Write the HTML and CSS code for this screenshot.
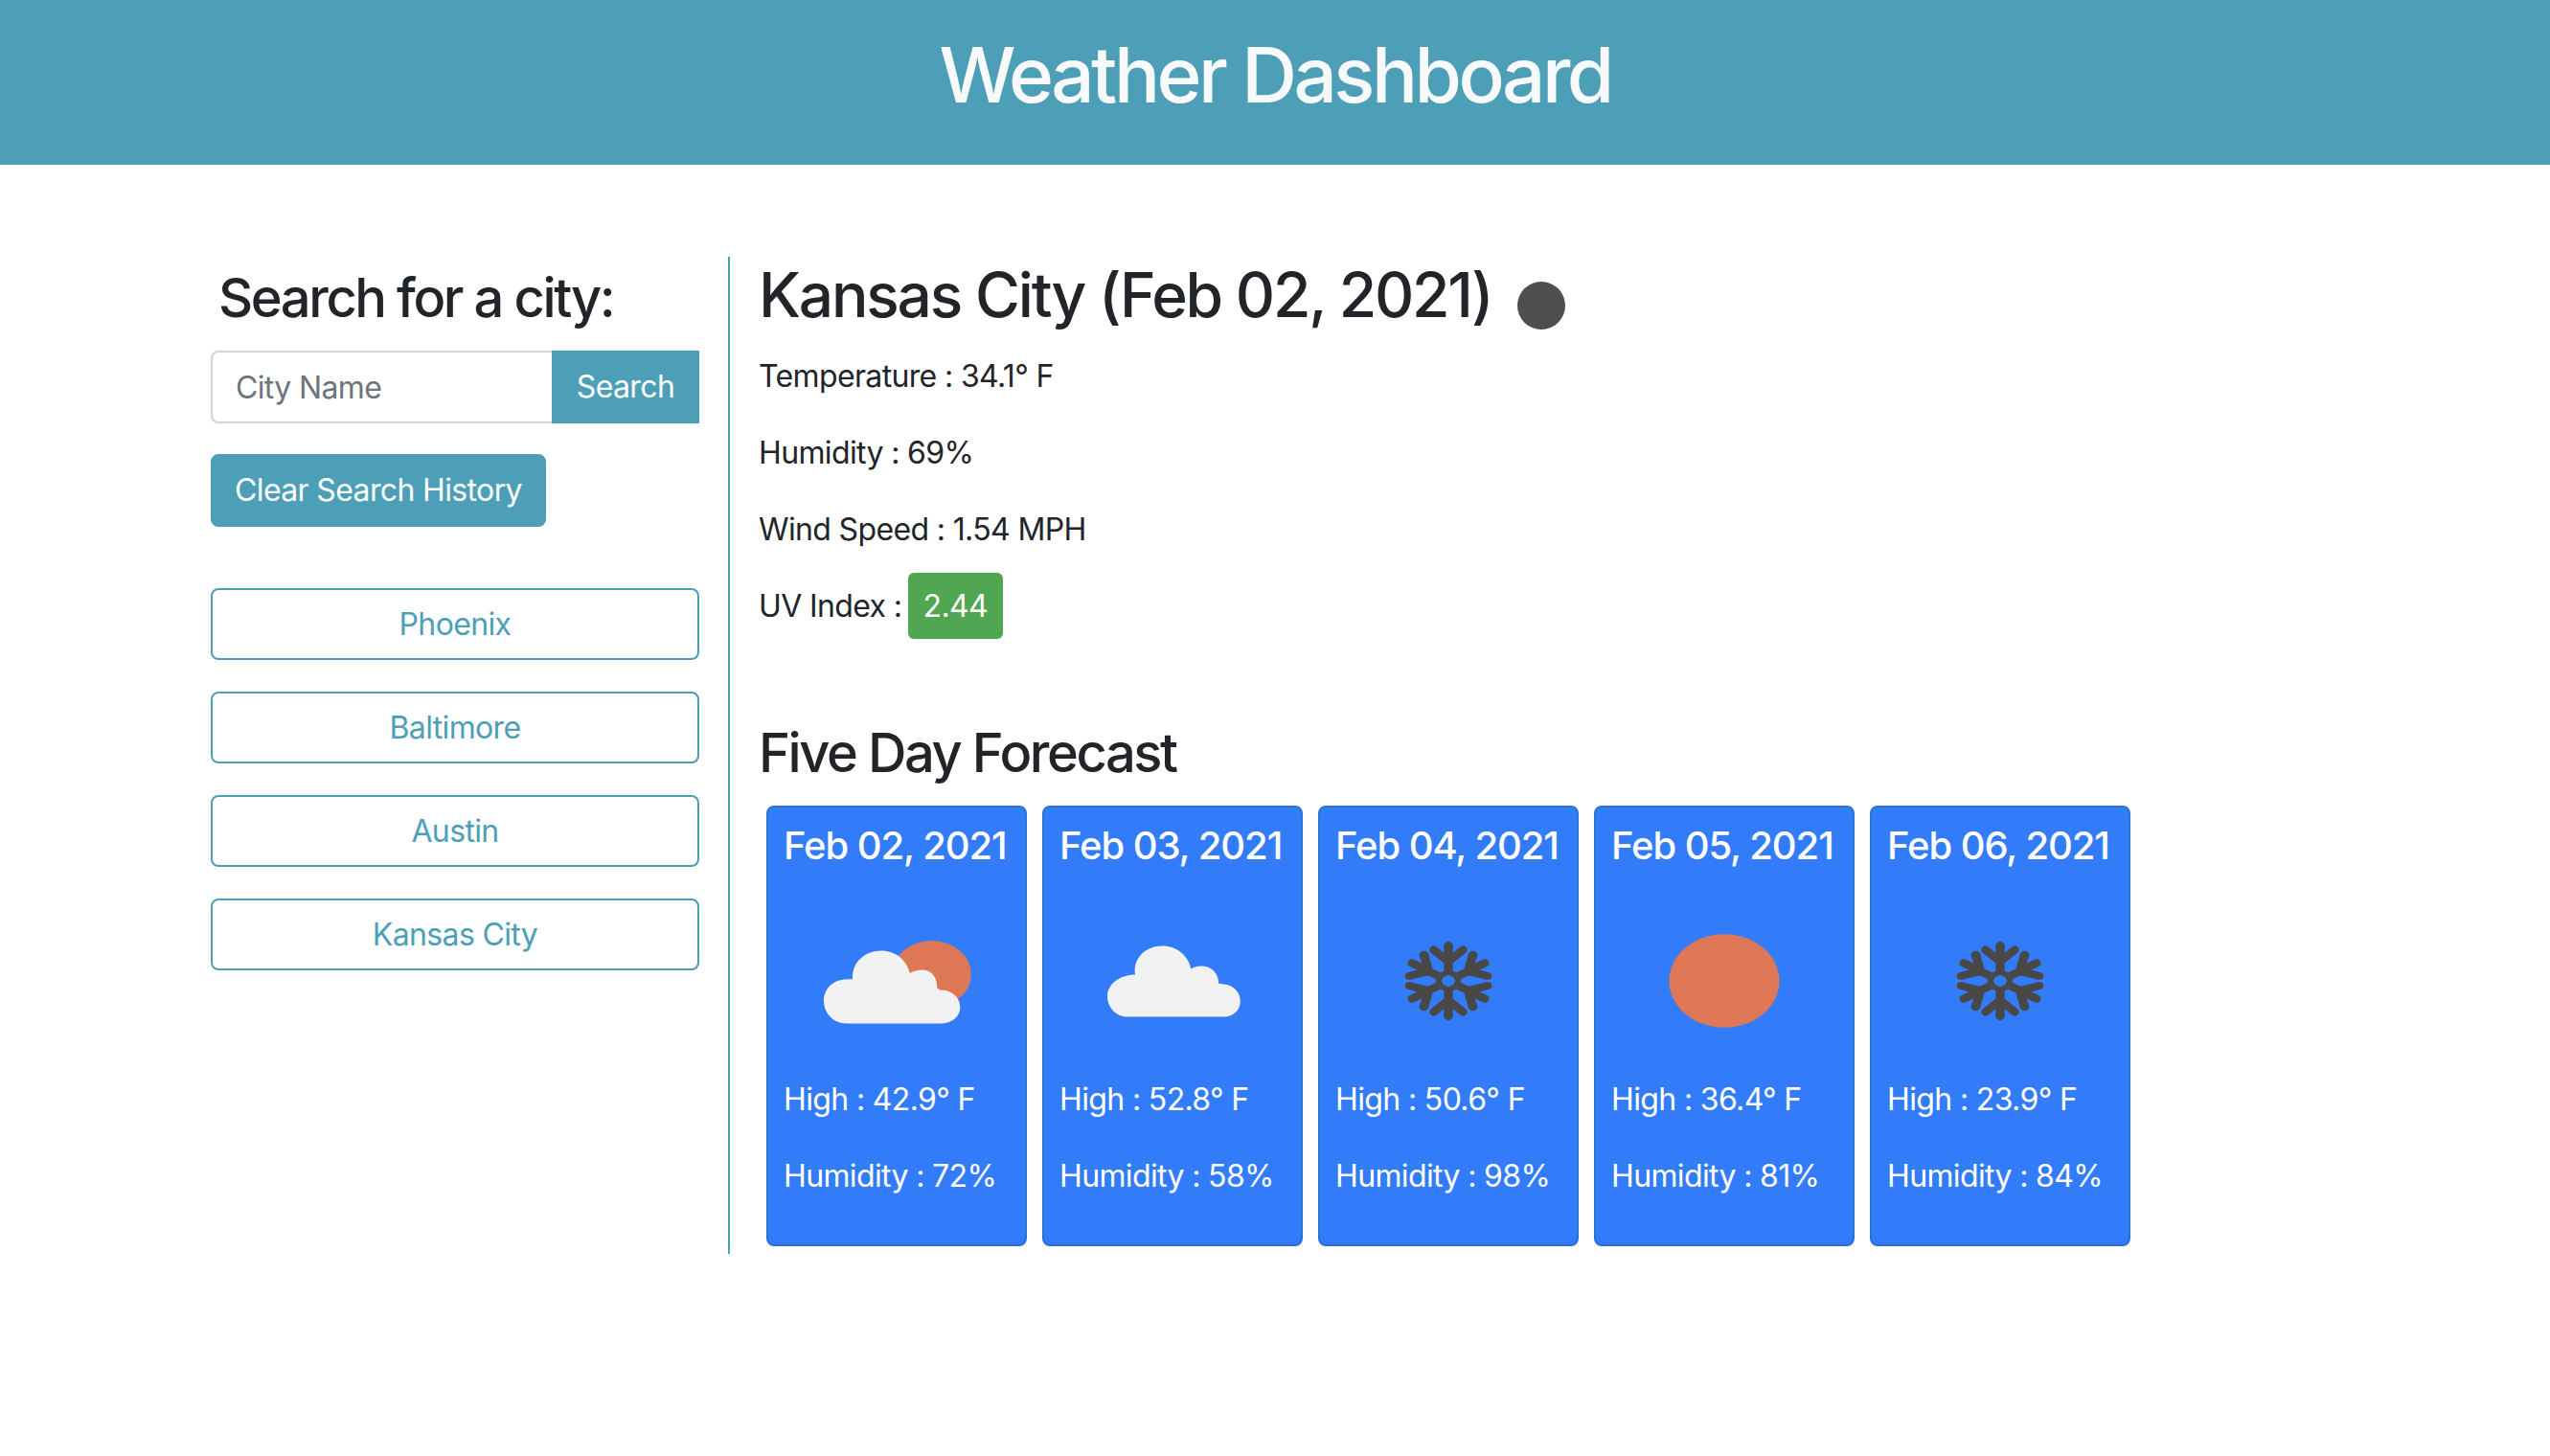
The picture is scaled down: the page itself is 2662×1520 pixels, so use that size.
FILE: index.html
```html
<!DOCTYPE html>
<html lang="en">
<head>
  <meta charset="UTF-8" />
  <title>Weather Dashboard</title>
  <link rel="stylesheet" href="styles.css">
</head>
<body>
  <svg class="icon-defs" aria-hidden="true">
    <symbol id="icon-few-clouds" viewBox="0 0 100 100" preserveAspectRatio="none">
      <circle cx="65.5" cy="46.5" r="17.5" fill="#dd7755" />
      <path fill="#f2f2f2" d="M27.7 72.2C21.9 72.2 17.8 66.7 17.8 60.5C17.8 54 22 49.3 27.7 49.3L30.5 49C30 41 35.5 34.2 43.2 34.2C49.5 34.2 54.5 39 55.9 46C57.3 44.9 59.3 44.2 61.6 44.2C65.5 44.2 68 48.5 67.9 53.8L69.3 54.7C74.5 54.7 78.1 58.5 78.1 63.8C78.1 68.7 74.5 72.2 70 72.2Z" />
    </symbol>
    <symbol id="icon-clouds" viewBox="0 0 100 100" preserveAspectRatio="none">
      <path fill="#f2f2f2" d="M30.6 68.8C25 68.8 21.2 64 21.2 58C21.2 51.5 27 46.8 33.5 46.8C32.3 38.5 38 31.8 45.5 31.8C52 31.8 57 37 58.2 43.8C59.3 42.8 61 42.2 63 42.2C67.3 42.2 70.5 46.3 70.3 51.3L72.7 51.8C77 52.2 80 56 80 60.5C80 65.2 77 68.8 72.7 68.8Z" />
    </symbol>
    <symbol id="icon-snow" viewBox="0 0 100 100" preserveAspectRatio="none">
      <g fill="none" stroke="#484848" stroke-width="4" stroke-linecap="round">
        <circle cx="50" cy="50" r="4.2" stroke-width="2.6" />
        <path id="snow-arm" d="M50 44.5V31.5M50 40L43.6 33.8M50 40L56.4 33.8" />
        <use href="#snow-arm" transform="rotate(60 50 50)" />
        <use href="#snow-arm" transform="rotate(120 50 50)" />
        <use href="#snow-arm" transform="rotate(180 50 50)" />
        <use href="#snow-arm" transform="rotate(240 50 50)" />
        <use href="#snow-arm" transform="rotate(300 50 50)" />
      </g>
    </symbol>
    <symbol id="icon-clear" viewBox="0 0 100 100" preserveAspectRatio="none">
      <circle cx="50" cy="50" r="24.4" fill="#dd7755" />
    </symbol>
  </svg>

  <header class="page-header">
    <h1>Weather Dashboard</h1>
  </header>

  <main class="layout">
    <aside class="sidebar">
      <h3 class="search-title">Search for a city:</h3>
      <form class="search-form">
        <input class="city-input" type="text" placeholder="City Name" />
        <button class="btn btn-search" type="button">Search</button>
      </form>
      <button class="btn btn-clear" type="button">Clear Search History</button>
      <div class="history">
        <button class="btn btn-city" type="button">Phoenix</button>
        <button class="btn btn-city" type="button">Baltimore</button>
        <button class="btn btn-city" type="button">Austin</button>
        <button class="btn btn-city" type="button">Kansas City</button>
      </div>
    </aside>

    <section class="content">
      <div class="current-title">
        <h2>Kansas City (Feb 02, 2021)</h2>
        <span class="current-icon"></span>
      </div>
      <p>Temperature : 34.1° F</p>
      <p>Humidity : 69%</p>
      <p>Wind Speed : 1.54 MPH</p>
      <p>UV Index : <span class="uv-badge">2.44</span></p>

      <h3 class="forecast-title">Five Day Forecast</h3>
      <div class="forecast">
        <article class="card">
          <h5>Feb 02, 2021</h5>
          <svg class="card-icon"><use href="#icon-few-clouds" /></svg>
          <p>High : 42.9° F</p>
          <p>Humidity : 72%</p>
        </article>
        <article class="card">
          <h5>Feb 03, 2021</h5>
          <svg class="card-icon"><use href="#icon-clouds" /></svg>
          <p>High : 52.8° F</p>
          <p>Humidity : 58%</p>
        </article>
        <article class="card">
          <h5>Feb 04, 2021</h5>
          <svg class="card-icon"><use href="#icon-snow" /></svg>
          <p>High : 50.6° F</p>
          <p>Humidity : 98%</p>
        </article>
        <article class="card">
          <h5>Feb 05, 2021</h5>
          <svg class="card-icon"><use href="#icon-clear" /></svg>
          <p>High : 36.4° F</p>
          <p>Humidity : 81%</p>
        </article>
        <article class="card">
          <h5>Feb 06, 2021</h5>
          <svg class="card-icon"><use href="#icon-snow" /></svg>
          <p>High : 23.9° F</p>
          <p>Humidity : 84%</p>
        </article>
      </div>
    </section>
  </main>
</body>
</html>
```

FILE: styles.css
```css
body {
  margin: 0;
  font-family: Inter, "Liberation Sans", sans-serif;
  font-size: 32px;
  line-height: 48px;
  letter-spacing: -0.02em;
  color: #212529;
  background-color: #fff;
}

h1, h2, h3, h5 {
  margin: 0;
  font-weight: 500;
  line-height: 1.2;
}

p {
  margin: 0 0 32px;
}

.icon-defs {
  display: none;
}

.page-header {
  height: 172px;
  box-sizing: border-box;
  padding-top: 30px;
  text-align: center;
  background-color: #4c9fb7;
  color: #f8f9fa;
}

.page-header h1 {
  font-size: 80px;
  letter-spacing: -0.044em;
}

.layout {
  display: flex;
  margin-top: 96px;
  padding-left: 220px;
}

.sidebar {
  width: 510px;
  padding-top: 10px;
  padding-right: 30px;
  border-right: 2px solid #4c9fb7;
}

.search-title {
  margin: 0 0 21px 8px;
  font-size: 56px;
  letter-spacing: -0.043em;
}

.search-form {
  display: flex;
  margin-bottom: 32px;
}

.city-input {
  flex: 1;
  min-width: 0;
  height: 76px;
  box-sizing: border-box;
  padding: 0 24px;
  border: 2px solid #ced4da;
  border-right: none;
  border-radius: 8px 0 0 8px;
  font: inherit;
  letter-spacing: inherit;
  color: #495057;
}

.city-input::placeholder {
  color: #6c757d;
  opacity: 1;
}

.btn {
  height: 76px;
  box-sizing: border-box;
  padding: 0 24px;
  border: 2px solid #4c9fb7;
  border-radius: 8px;
  font: inherit;
  letter-spacing: inherit;
  color: #fff;
  background-color: #4c9fb7;
}

.btn-search {
  width: 154px;
  padding: 0;
  border-radius: 0;
}

.btn-clear {
  display: block;
  width: 350px;
  padding: 0;
}

.history {
  display: flex;
  flex-direction: column;
  gap: 33px;
  margin-top: 64px;
}

.btn-city {
  height: 75px;
  color: #4c9fb7;
  background-color: #fff;
}

.content {
  flex: 1;
  padding-left: 30px;
}

.current-title {
  display: flex;
  margin-bottom: 22px;
}

.current-title h2 {
  margin-top: 2px;
  font-size: 64px;
  letter-spacing: -0.034em;
}

.current-icon {
  width: 50px;
  height: 50px;
  margin: 26px 0 0 26px;
  border-radius: 50%;
  background-color: #4e4e4e;
}

.uv-badge {
  margin-left: -2px;
  padding: 15px 16px;
  border-radius: 6px;
  color: #fff;
  background-color: #50a651;
}

.forecast-title {
  margin: 96px 0 21px;
  font-size: 56px;
  letter-spacing: -0.043em;
}

.forecast {
  display: flex;
  gap: 16px;
  padding-left: 8px;
  padding-bottom: 8px;
}

.card {
  width: 236px;
  padding: 16px;
  border: 2px solid #2f6fd8;
  border-radius: 8px;
  color: #fff;
  background-color: #337cf9;
}

.card h5 {
  margin-bottom: 17px;
  font-size: 40px;
  letter-spacing: -0.027em;
  white-space: nowrap;
}

.card-icon {
  display: block;
  width: 236px;
  height: 200px;
}

.card p:last-child {
  margin-bottom: 31px;
}
```
